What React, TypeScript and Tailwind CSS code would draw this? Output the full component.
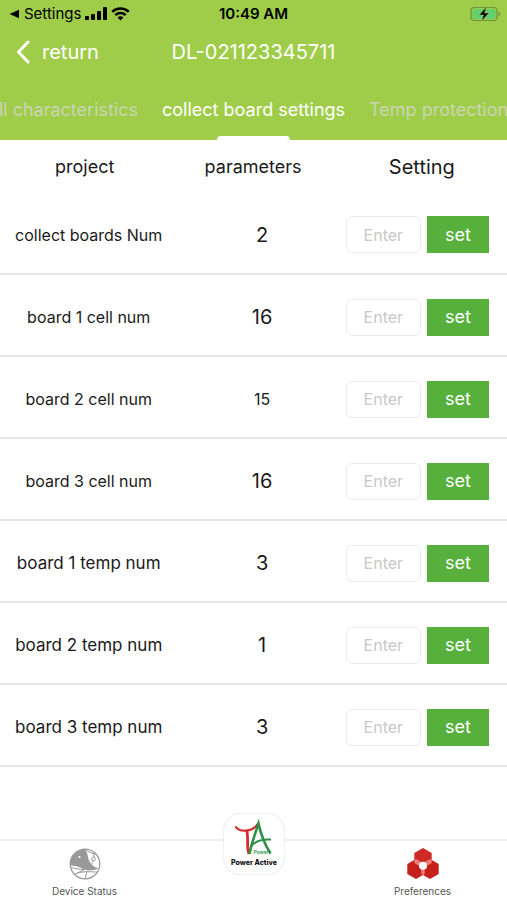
import { ReactNode, useState } from "react";

type SettingRow = {
  id: string;
  label: string;
  value: string;
  labelSize: string;
  valueSize: string;
};

const rows: SettingRow[] = [
  { id: "boards", label: "collect boards Num", value: "2", labelSize: "text-base", valueSize: "text-xl" },
  { id: "cell-1", label: "board 1 cell num", value: "16", labelSize: "text-base", valueSize: "text-xl" },
  { id: "cell-2", label: "board 2 cell num", value: "15", labelSize: "text-base", valueSize: "text-base" },
  { id: "cell-3", label: "board 3 cell num", value: "16", labelSize: "text-base", valueSize: "text-xl" },
  { id: "temp-1", label: "board 1 temp num", value: "3", labelSize: "text-[17px]", valueSize: "text-xl" },
  { id: "temp-2", label: "board 2 temp num", value: "1", labelSize: "text-[17px]", valueSize: "text-xl" },
  { id: "temp-3", label: "board 3 temp num", value: "3", labelSize: "text-[17px]", valueSize: "text-xl" },
];

const tabs = ["ll characteristics", "collect board settings", "Temp protection"];

function SignalIcon() {
  return (
    <svg width="22" height="14" viewBox="0 0 22 14" fill="currentColor" aria-hidden="true">
      <rect x="0" y="9" width="4" height="4" rx="1" />
      <rect x="6" y="7" width="4" height="6" rx="1" />
      <rect x="12" y="4" width="4" height="9" rx="1" />
      <rect x="18" y="0" width="4" height="13" rx="1" />
    </svg>
  );
}

function WifiIcon() {
  return (
    <svg width="19" height="14" viewBox="0 0 19 14" fill="none" stroke="currentColor" strokeWidth="2.5" aria-hidden="true">
      <path d="M1.2 4.9 C5.8 .4 13.2 .4 17.8 4.9" />
      <path d="M4.3 8.2 C7.2 5.4 11.8 5.4 14.7 8.2" />
      <path d="M9.5 13.4 L6.6 10.4 C8.2 9 10.8 9 12.4 10.4 Z" fill="currentColor" stroke="none" />
    </svg>
  );
}

function BatteryIcon() {
  return (
    <svg width="31" height="16" viewBox="0 0 31 16" aria-hidden="true">
      <rect x="1" y="1.5" width="26" height="13" rx="3.5" fill="none" stroke="#6f9140" strokeWidth="1.2" />
      <rect x="2.6" y="3" width="22.8" height="10" rx="2" fill="#62cf70" />
      <path d="M28.5 5.5 C30.6 6.5 30.6 9.5 28.5 10.5 Z" fill="#6f9140" />
      <path d="M16.5 .8 L9 9 H13.4 L11.5 15.2 L19 7 H14.6 Z" fill="#000" stroke="#9fcd4a" strokeWidth=".6" />
    </svg>
  );
}

function DeviceIcon() {
  return (
    <svg width="32" height="32" viewBox="0 0 32 32" aria-hidden="true">
      <circle cx="16" cy="16" r="14.8" fill="#fff" stroke="#999" strokeWidth="1.2" />
      <path d="M1.5 17.5 C1 8 7 2.5 15 1.3 C18 3 18.5 6 19 9 C20 15 24 19 30 20.5 C24 23 18 23 14.5 21 C10.5 18.5 5 17.5 1.5 17.5 Z" fill="#999" />
      <path d="M15 1.3 C20 4 24 6 27 6 M24.5 4.5 C25.5 9 25 14 21.5 17 M2 19.5 C6 21 11 21 15.5 21.5 L5.5 26.5 M5.5 26.5 C12 22.5 22 24 28 24 M18 23 L16 30.5" fill="none" stroke="#999" strokeWidth="1" />
      <circle cx="24.5" cy="11" r="1.8" fill="#fff" stroke="#999" />
      <circle cx="10.5" cy="9" r="1.1" fill="#fff" />
    </svg>
  );
}

function PreferencesIcon() {
  return (
    <svg width="32" height="32" viewBox="0 0 32 32" aria-hidden="true">
      <path d="M16 0 L24.7 5 V15 L16 20 L7.3 15 V5 Z" fill="#cf2a24" />
      <path d="M9 11 L17.7 16 V26 L9 31 L.3 26 V16 Z" fill="#c5201b" />
      <path d="M23 11 L31.7 16 V26 L23 31 L14.3 26 V16 Z" fill="#c5201b" />
      <path d="M7.3 12 L9 11 L17.7 16 V19 L16 20 L7.3 15 Z" fill="#ee7d78" />
      <path d="M24.7 12 L23 11 L14.3 16 V19 L16 20 L24.7 15 Z" fill="#ee7d78" />
      <path d="M14.3 16 H17.7 V26 L16 27 L14.3 26 Z" fill="#ee7d78" />
      <circle cx="16" cy="17.8" r="4" fill="#fff" />
    </svg>
  );
}

function PowerLogo() {
  return (
    <svg width="60" height="60" viewBox="0 0 60 60" aria-hidden="true">
      <path d="M11.5 12.5 C15 18.5 29 18.5 34 9.5" fill="none" stroke="#d62b30" strokeWidth="2.2" />
      <path d="M22.5 16 C25 23 22 32 25 40" fill="none" stroke="#d62b30" strokeWidth="2.8" />
      <path d="M25.5 40 C27 31 31 20 34.5 9.5 C37 21 41 31 46.5 39.5" fill="none" stroke="#2c8f46" strokeWidth="2.6" />
      <path d="M27.5 32 C32 26 39 25 47 25.5" fill="none" stroke="#2c8f46" strokeWidth="2" />
      <text x="37" y="40" textAnchor="middle" fontSize="5" fontWeight="600" fill="#2c8f46">
        Power
      </text>
      <text x="30" y="51" textAnchor="middle" fontSize="7" fontWeight="800" fill="#111">
        Power Active
      </text>
    </svg>
  );
}

function FooterLink({ label, children }: { label: string; children: ReactNode }) {
  return (
    <a href="#" className="flex flex-1 flex-col items-center gap-[3px] pt-[7px] text-[10px] leading-4 text-[#555]">
      {children}
      {label}
    </a>
  );
}

export default function App() {
  const [activeTab, setActiveTab] = useState(tabs[1]);
  const [values, setValues] = useState<Record<string, string>>({});

  return (
    <div className="flex min-h-screen flex-col overflow-x-hidden bg-white font-['Inter',sans-serif] text-[#1a1a1a]">
      <header className="bg-[#9fcd4a]">
        <div className="grid h-7 grid-cols-3 items-center px-1.5 text-[15px] text-black">
          <div className="flex items-center gap-1 pl-0.5">
            <svg width="12" height="10" viewBox="0 0 12 10" fill="currentColor" aria-hidden="true">
              <path d="M1.5 5 L11 .8 V9.2 Z" />
            </svg>
            <span>Settings</span>
            <SignalIcon />
            <WifiIcon />
          </div>
          <span className="text-center font-semibold">10:49 AM</span>
          <span className="justify-self-end">
            <BatteryIcon />
          </span>
        </div>

        <div className="grid h-12 grid-cols-[1fr_auto_1fr] items-center px-4 text-xl text-white">
          <button type="button" className="flex items-center gap-3 justify-self-start">
            <svg width="14" height="24" viewBox="0 0 14 24" fill="none" stroke="currentColor" strokeWidth="3" strokeLinecap="round" strokeLinejoin="round" aria-hidden="true">
              <path d="M12 2 L2.5 12 L12 22" />
            </svg>
            return
          </button>
          <h1>DL-021123345711</h1>
        </div>

        <nav className="flex h-16 justify-center gap-6 whitespace-nowrap text-lg">
          {tabs.map((tab) => (
            <button
              key={tab}
              type="button"
              onClick={() => setActiveTab(tab)}
              className={[
                "flex shrink-0 flex-col items-center justify-between pt-5",
                tab === activeTab ? "text-white" : "text-[#c9d5b4]",
              ].join(" ")}
            >
              <span className="leading-7">{tab}</span>
              {tab === activeTab ? <span className="h-1 w-[73px] rounded-t-sm bg-white" /> : null}
            </button>
          ))}
        </nav>
      </header>

      <main className="pb-10">
        <table className="w-full table-fixed">
          <thead>
            <tr className="h-[52px] text-lg">
              <th className="w-[35%] pr-2 pt-0.5 font-normal">project</th>
              <th className="w-[33%] pr-4 pt-0.5 font-normal">parameters</th>
              <th className="w-[32%] pr-2 pt-0.5 text-xl font-normal">Setting</th>
            </tr>
          </thead>
          <tbody>
            {rows.map((row) => (
              <tr key={row.id} className="h-[82px] border-b-2 border-[#e6e6e6]">
                <td className="pt-1 text-center">
                  <label htmlFor={row.id} className={["block leading-6", row.labelSize].join(" ")}>
                    {row.label}
                  </label>
                </td>
                <td className={["pl-0.5 pt-1 text-center", row.valueSize].join(" ")}>{row.value}</td>
                <td className="pl-px pt-1">
                  <div className="flex gap-1.5 pr-[18px]">
                    <input
                      id={row.id}
                      type="text"
                      placeholder="Enter"
                      value={values[row.id] ?? ""}
                      onChange={(e) => setValues({ ...values, [row.id]: e.target.value })}
                      className="h-[37px] min-w-0 flex-1 rounded-md border border-[#ececec] text-center text-base placeholder:text-[#c8c8c8]"
                    />
                    <button type="button" className="h-[37px] w-[62px] bg-[#56b03b] text-lg text-white">
                      set
                    </button>
                  </div>
                </td>
              </tr>
            ))}
          </tbody>
        </table>
      </main>

      <footer className="mt-auto flex h-[61px] border-t-2 border-[#eeeeee]">
        <FooterLink label="Device Status">
          <DeviceIcon />
        </FooterLink>
        <div className="flex flex-1 justify-center">
          <a
            href="#"
            aria-label="Power Active"
            className="-mt-[27px] h-[60px] w-[60px] overflow-hidden rounded-2xl bg-white shadow-[0_0_2px_#cccccc]"
          >
            <PowerLogo />
          </a>
        </div>
        <FooterLink label="Preferences">
          <PreferencesIcon />
        </FooterLink>
      </footer>
    </div>
  );
}
